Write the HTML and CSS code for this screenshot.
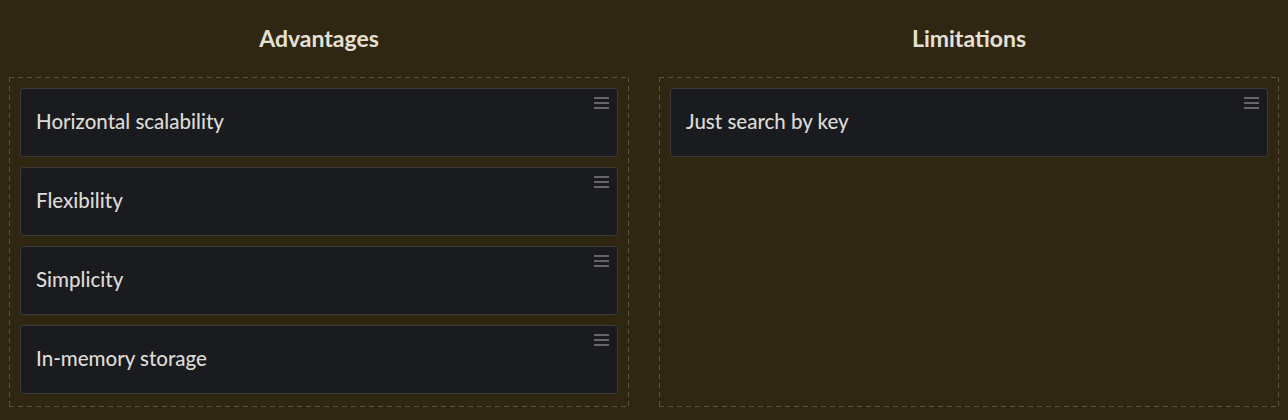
FILE: index.html
```html
<!DOCTYPE html>
<html>
<head>
<meta charset="utf-8">
<link rel="stylesheet" href="styles.css">
</head>
<body>
<div class="board">
  <section class="column">
    <h2 class="title">Advantages</h2>
    <div class="drop">
      <div class="card"><span class="label">Horizontal scalability</span><span class="handle"><svg width="15" height="12" viewBox="0 0 15 12"><rect x="0" y="0" width="15" height="2"/><rect x="0" y="5" width="15" height="2"/><rect x="0" y="10" width="15" height="2"/></svg></span></div>
      <div class="card"><span class="label">Flexibility</span><span class="handle"><svg width="15" height="12" viewBox="0 0 15 12"><rect x="0" y="0" width="15" height="2"/><rect x="0" y="5" width="15" height="2"/><rect x="0" y="10" width="15" height="2"/></svg></span></div>
      <div class="card"><span class="label">Simplicity</span><span class="handle"><svg width="15" height="12" viewBox="0 0 15 12"><rect x="0" y="0" width="15" height="2"/><rect x="0" y="5" width="15" height="2"/><rect x="0" y="10" width="15" height="2"/></svg></span></div>
      <div class="card"><span class="label">In-memory storage</span><span class="handle"><svg width="15" height="12" viewBox="0 0 15 12"><rect x="0" y="0" width="15" height="2"/><rect x="0" y="5" width="15" height="2"/><rect x="0" y="10" width="15" height="2"/></svg></span></div>
    </div>
  </section>
  <section class="column">
    <h2 class="title">Limitations</h2>
    <div class="drop">
      <div class="card"><span class="label">Just search by key</span><span class="handle"><svg width="15" height="12" viewBox="0 0 15 12"><rect x="0" y="0" width="15" height="2"/><rect x="0" y="5" width="15" height="2"/><rect x="0" y="10" width="15" height="2"/></svg></span></div>
    </div>
  </section>
</div>
</body>
</html>
```
FILE: styles.css
```css
html, body {
  margin: 0;
  padding: 0;
  background: #302713;
}
body {
  font-family: "Lato", "Liberation Sans", sans-serif;
  height: 420px;
  overflow: hidden;
}
.board {
  display: grid;
  grid-template-columns: 620px 620px;
  gap: 30px;
  padding: 0 10px 0 9px;
}
.column {
  display: flex;
  flex-direction: column;
}
.title {
  margin: 0;
  height: 77px;
  box-sizing: border-box;
  padding-top: 24px;
  text-align: center;
  font-size: 23px;
  font-weight: 700;
  color: #e6e0d4;
  line-height: 28px;
}
.drop {
  height: 330px;
  box-sizing: border-box;
  padding: 11px;
  display: flex;
  flex-direction: column;
  gap: 10.5px;
  background:
    repeating-linear-gradient(90deg, #5b5340 0 5px, transparent 5px 9px) left top / 100% 1px no-repeat,
    repeating-linear-gradient(90deg, #5b5340 0 5px, transparent 5px 9px) left bottom / 100% 1px no-repeat,
    repeating-linear-gradient(180deg, #5b5340 0 5px, transparent 5px 9px) left top / 1px 100% no-repeat,
    repeating-linear-gradient(180deg, #5b5340 0 5px, transparent 5px 9px) right top / 1px 100% no-repeat;
}
.card {
  position: relative;
  height: 68.6px;
  flex: none;
  box-sizing: border-box;
  background: #1a1b1e;
  border: 1px solid #3b3a36;
  border-radius: 3px;
  display: flex;
  align-items: center;
  padding-left: 15px;
  padding-bottom: 3px;
}
.label {
  font-size: 20.5px;
  color: #dcdad6;
  font-weight: 500;
}
.handle {
  position: absolute;
  top: 8px;
  right: 8px;
  line-height: 0;
}
.handle svg { fill: #66666a; }
```
